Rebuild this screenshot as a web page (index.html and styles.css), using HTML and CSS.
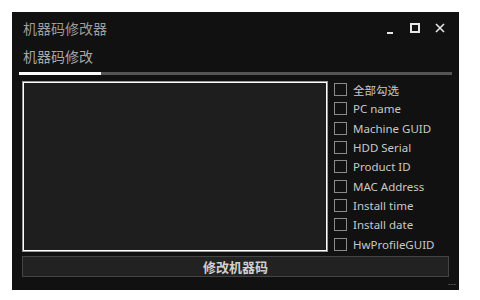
FILE: index.html
```html
<!DOCTYPE html>
<html lang="zh-CN">
<head>
<meta charset="UTF-8">
<meta name="viewport" content="width=device-width, initial-scale=1.0">
<title>机器码修改器</title>
<link rel="stylesheet" href="styles.css">
</head>
<body>

<div class="window">
    <div class="titlebar">
        <span class="title">机器码修改器</span>
        <div class="controls">
            <svg class="ctl" width="9" height="11" viewBox="0 0 9 11"><rect x="1" y="9" width="6" height="2" fill="#e6e6e6"/></svg>
            <svg class="ctl" width="10" height="10" viewBox="0 0 10 10"><rect x="1" y="1" width="8" height="8" fill="none" stroke="#e6e6e6" stroke-width="2"/></svg>
            <svg class="ctl" width="10" height="10" viewBox="0 0 10 10"><path d="M1 1 L9 9 M9 1 L1 9" stroke="#e6e6e6" stroke-width="1.6"/></svg>
        </div>
    </div>

    <div class="tabs">
        <div class="tab">机器码修改</div>
        <div class="tab-bar"><div class="tab-active"></div></div>
    </div>

    <div class="content">
        <div class="textbox"></div>
        <ul class="checklist">
            <li><span class="box"></span>全部勾选</li>
            <li><span class="box"></span>PC name</li>
            <li><span class="box"></span>Machine GUID</li>
            <li><span class="box"></span>HDD Serial</li>
            <li><span class="box"></span>Product ID</li>
            <li><span class="box"></span>MAC Address</li>
            <li><span class="box"></span>Install time</li>
            <li><span class="box"></span>Install date</li>
            <li><span class="box"></span>HwProfileGUID</li>
        </ul>
    </div>

    <button class="btn">修改机器码</button>

    <div class="grip">- - -</div>
</div>

</body>
</html>
```

FILE: styles.css
```css
body {
    margin: 0;
    background-color: #ffffff;
    font-family: "Noto Sans", "Noto Sans CJK SC", sans-serif;
}
.window {
    position: relative;
    margin: 12px;
    width: 447px;
    height: 278px;
    background-color: #111111;
    display: flex;
    flex-direction: column;
}
.titlebar {
    height: 32px;
    display: flex;
    align-items: center;
    justify-content: space-between;
    padding-left: 11px;
}
.title {
    font-size: 14px;
    color: #9c9c9c;
}
.controls {
    display: flex;
    align-items: center;
    gap: 15px;
    padding-right: 14px;
}
.ctl {
    display: block;
}
.tabs {
    margin-left: 7px;
    width: 433px;
}
.tab {
    height: 28px;
    line-height: 26px;
    padding-left: 4px;
    font-size: 14px;
    color: #a6a6a6;
}
.tab-bar {
    height: 3px;
    background-color: #555555;
}
.tab-active {
    width: 82px;
    height: 100%;
    background-color: #ffffff;
}
.content {
    display: flex;
    height: 171px;
    margin-top: 6px;
    margin-left: 10px;
    gap: 6px;
}
.textbox {
    width: 304px;
    height: 169px;
    background-color: #1e1e1e;
    border: 1px solid #9a9a9a;
    box-shadow: inset 0 0 0 1px #ffffff;
}
.checklist {
    list-style: none;
    margin: -1px 0 0 0;
    padding: 0;
}
.checklist li {
    height: 19.3px;
    display: flex;
    align-items: center;
    gap: 6px;
    font-size: 11.5px;
    color: #c8c8c8;
    white-space: nowrap;
}
.box {
    width: 11px;
    height: 11px;
    border: 1px solid #8a8a8a;
}
.btn {
    margin-top: 4px;
    margin-left: 10px;
    width: 427px;
    height: 21px;
    padding: 0;
    background-color: #222222;
    border: 1px solid #444444;
    color: #d0d0d0;
    font-family: "Noto Sans CJK SC", sans-serif;
    font-size: 13px;
    font-weight: bold;
}
.grip {
    position: absolute;
    right: 4px;
    bottom: 1px;
    font-size: 8px;
    color: #666666;
    letter-spacing: -1px;
}
```
